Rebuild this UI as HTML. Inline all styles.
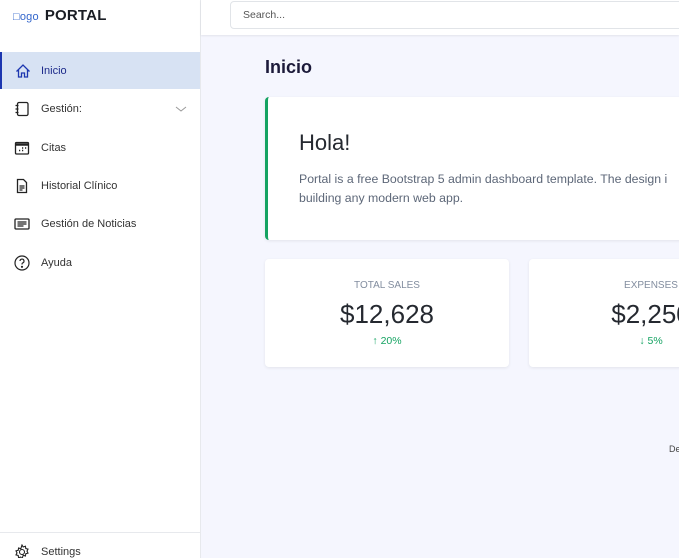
<!DOCTYPE html>
<html><head><meta charset="utf-8"><style>
*{margin:0;padding:0;box-sizing:border-box}
html,body{width:679px;height:558px;overflow:hidden}
body{background:#f5f6fe;font-family:"Liberation Sans",sans-serif;position:relative;color:#252930}
.side{position:absolute;left:0;top:0;width:201px;height:558px;background:#fff;border-right:1px solid #e7e9ed}
.logo{position:absolute;left:13px;top:7px;font-size:15px;color:#1a1d24;font-weight:bold;letter-spacing:.2px}
.logo small{font-size:11px;color:#3366cc;margin-right:6px;font-weight:normal}
.item{position:absolute;left:0;width:200px;height:37px;font-size:11px;color:#333;display:flex;align-items:center}
.item svg{position:absolute;left:14px}
.item span{position:absolute;left:41px;top:13px}
.act{background:#d7e2f3;border-left:2px solid #1c36b0;color:#1c2a8a}
.hdr{position:absolute;left:201px;top:0;width:478px;height:35px;background:#fff;box-shadow:0 1px 2px rgba(0,0,0,.08)}
.search{position:absolute;left:29px;top:1px;width:460px;height:28px;border:1px solid #e1e4e8;border-radius:4px;font-size:10.5px;color:#555;padding:7px 12px}
.card{position:absolute;background:#fff;border-radius:4px;box-shadow:0 1px 3px rgba(0,0,0,.08)}
</style></head><body>
<div class="side">
<div class="logo"><small>&#9633;ogo</small>PORTAL</div>
<div class="item act" style="top:52px"><svg style="left:13px" width="16" height="16" viewBox="0 0 16 16" fill="none" stroke="#1c36b0" stroke-width="1.3"><path d="M1.5 8.5L8 2l6.5 6.5M3.5 6.5V14h3v-4h3v4h3V6.5"/></svg><span style="left:39px">Inicio</span></div>
<div class="item" style="top:90px"><svg width="16" height="16" viewBox="0 0 16 16" fill="none" stroke="#222" stroke-width="1.3"><rect x="3.5" y="1.5" width="10.5" height="13" rx="1.5"/><path d="M1.5 4.5h3M1.5 8h3M1.5 11.5h3"/></svg><span>Gestión:</span><svg style="left:175px" width="12" height="8" viewBox="0 0 12 8" fill="none" stroke="#999"><path d="M1 2l5 4 5-4"/></svg></div>
<div class="item" style="top:129px"><svg width="16" height="16" viewBox="0 0 16 16" fill="none" stroke="#222" stroke-width="1.3"><rect x="1.5" y="2.5" width="13" height="11.5" rx="1"/><path d="M1.5 4.5h13" stroke-width="2.5"/><path d="M5 10.5h1.2M8 10.5h1.2M11 8h1.2M8 8h1.2" stroke-width="1.5"/></svg><span>Citas</span></div>
<div class="item" style="top:167px"><svg width="16" height="16" viewBox="0 0 16 16" fill="none" stroke="#222" stroke-width="1.3"><path d="M3.5 1.5h6l3 3v10h-9z"/><path d="M5.5 8h5M5.5 10h5M5.5 12h3"/></svg><span>Historial Clínico</span></div>
<div class="item" style="top:205px"><svg width="16" height="16" viewBox="0 0 16 16" fill="none" stroke="#222" stroke-width="1.3"><rect x="1" y="3" width="14" height="10" rx="1"/><path d="M3.5 6h9M3.5 8h9M3.5 10h6"/></svg><span>Gestión de Noticias</span></div>
<div class="item" style="top:244px"><svg width="16" height="16" viewBox="0 0 16 16" fill="none" stroke="#222" stroke-width="1.2"><circle cx="8" cy="8" r="7"/><path d="M6 6a2 2 0 1 1 2.5 2c-.5.3-.5.8-.5 1.5"/><circle cx="8" cy="11.8" r=".5" fill="#222"/></svg><span>Ayuda</span></div>
<div style="position:absolute;left:0;top:532px;width:200px;border-top:1px solid #e7e9ed"></div>
<div class="item" style="top:533px"><svg style="top:11px" width="16" height="16" viewBox="0 0 16 16" fill="none" stroke="#222" stroke-width="1.1"><circle cx="8" cy="8" r="2.5"/><path d="M8 1l1.2 2 2.2-.8.4 2.3 2.2.6-1 2 1 2-2.2.6-.4 2.3-2.2-.8L8 15l-1.2-2-2.2.8-.4-2.3L2 10.9l1-2-1-2 2.2-.6.4-2.3 2.2.8z"/></svg><span style="top:13px">Settings</span></div>
</div>
<div class="hdr"><div class="search">Search...</div></div>
<div style="position:absolute;left:265px;top:57px;font-size:18px;font-weight:bold;color:#1c1a3a">Inicio</div>
<div class="card" style="left:265px;top:97px;width:430px;height:143px;border-left:3px solid #15a362;border-radius:4px 0 0 4px">
<div style="position:absolute;left:31px;top:33px;font-size:22px;color:#252930">Hola!</div>
<div style="position:absolute;left:31px;top:73px;width:420px;font-size:12.3px;line-height:19px;color:#5d6778;white-space:nowrap">Portal is a free Bootstrap 5 admin dashboard template. The design i<br>building any modern web app.</div>
</div>
<div class="card" style="left:265px;top:259px;width:244px;height:108px;text-align:center">
<div style="margin-top:21px;font-size:10px;color:#828d9f">TOTAL SALES</div>
<div style="margin-top:8px;font-size:26px;color:#252930">$12,628</div>
<div style="margin-top:5px;font-size:10.5px;color:#15a362">&#8593; 20%</div>
</div>
<div class="card" style="left:529px;top:259px;width:244px;height:108px;text-align:center">
<div style="margin-top:21px;font-size:10px;color:#828d9f">EXPENSES</div>
<div style="margin-top:8px;font-size:26px;color:#252930">$2,250</div>
<div style="margin-top:5px;font-size:10.5px;color:#15a362">&#8595; 5%</div>
</div>
<div style="position:absolute;left:669px;top:444px;font-size:9px;color:#444">De</div>
</body></html>
